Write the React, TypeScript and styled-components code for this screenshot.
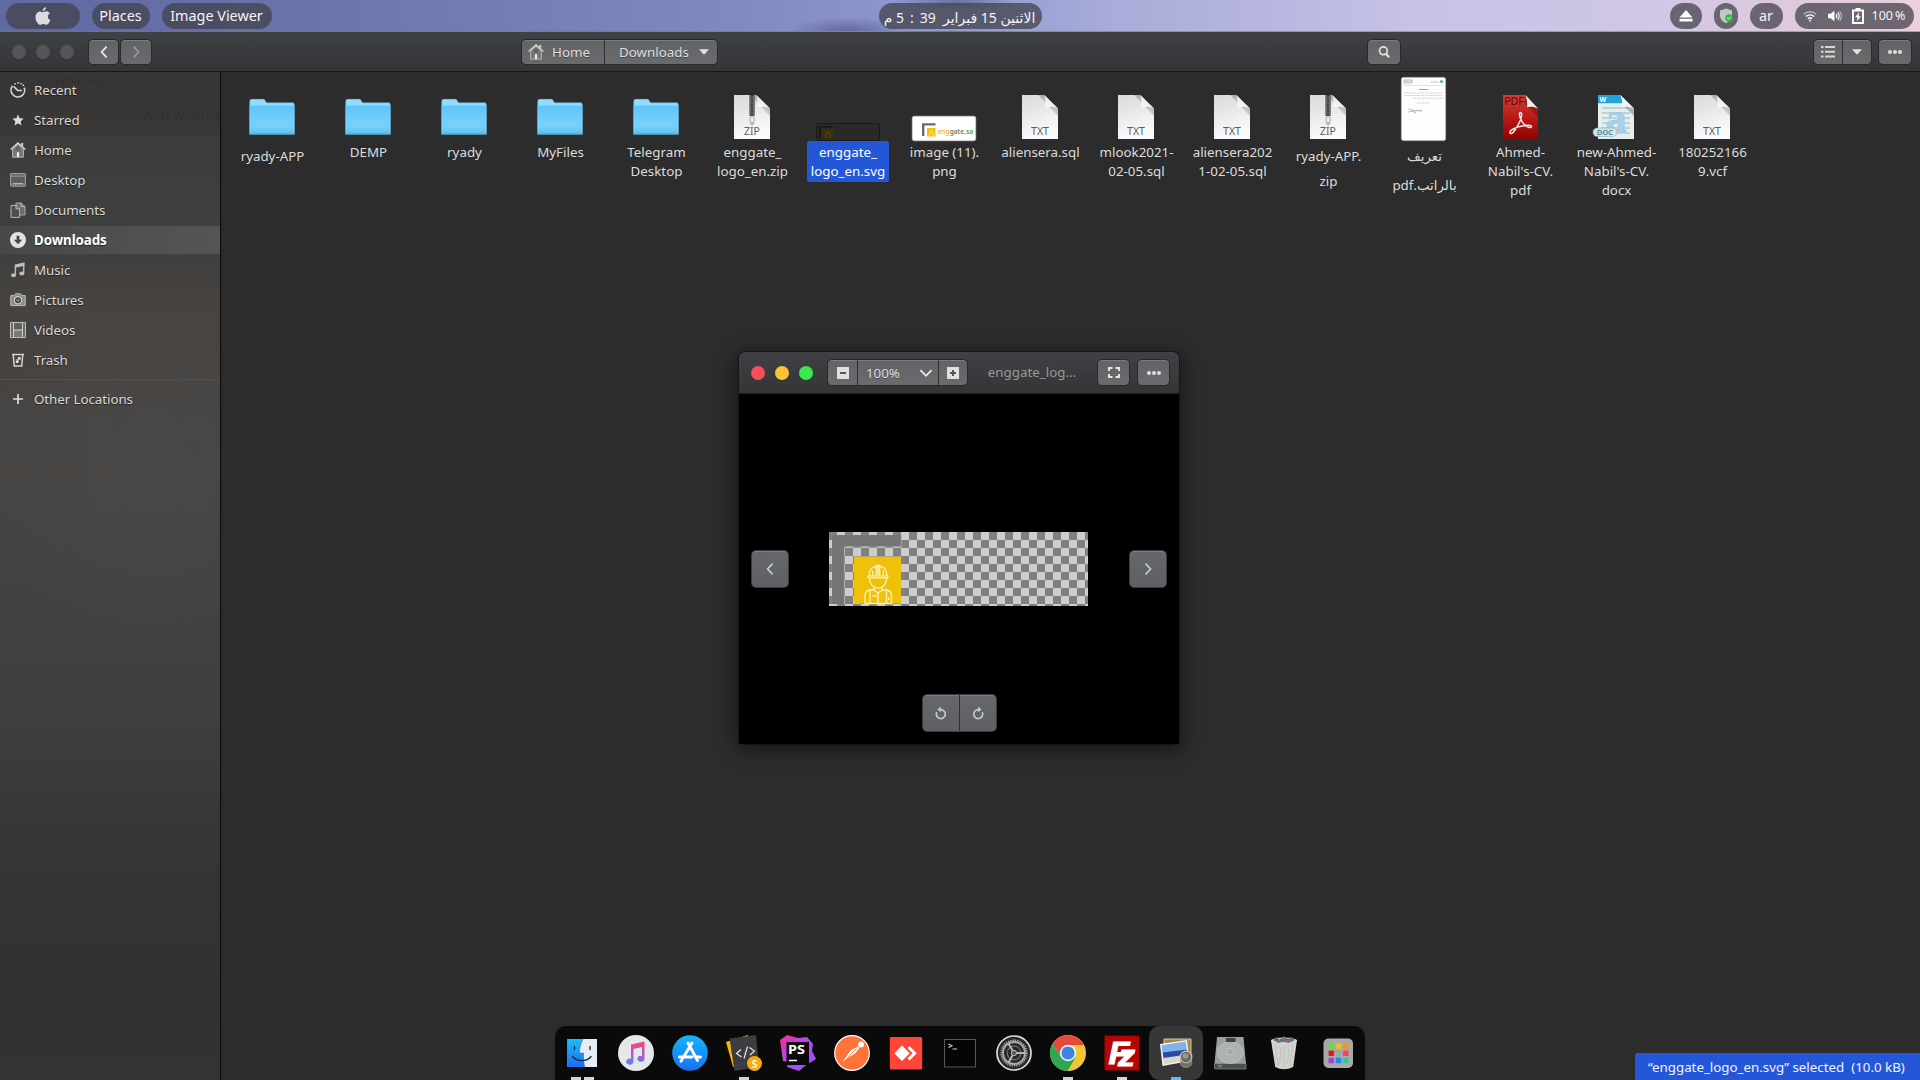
import React from "react";
import styled, { createGlobalStyle, css } from "styled-components";

const FONT = `"Noto Sans", "DejaVu Sans", sans-serif`;

const Global = createGlobalStyle`
  * { box-sizing: border-box; }
  html, body { margin: 0; padding: 0; background: #2c2c2c; }
  body { font-family: ${FONT}; font-size: 13.33px; color: #d6d6d6; overflow: hidden; }
  svg { display: block; flex: none; overflow: visible; }
`;

const Desktop = styled.div`
  position: relative;
  width: 1920px;
  height: 1080px;
  display: flex;
  flex-direction: column;
  overflow: hidden;
`;

/* ---------- top panel ---------- */
const Panel = styled.header`
  height: 32px;
  flex: none;
  display: grid;
  grid-template-columns: 1fr auto 1fr;
  padding: 3px 6px 0;
  border-bottom: 1px solid rgba(120, 115, 150, 0.55);
  background:
    radial-gradient(ellipse 60px 14px at 848px 31px, rgba(90, 88, 150, 0.75), rgba(90, 88, 150, 0) 100%),
    radial-gradient(ellipse 60px 9px at 955px 2px, rgba(80, 80, 130, 0.6), rgba(90, 88, 150, 0) 100%),
    linear-gradient(90deg, #6169a2 0, #6870a9 240px, #747db3 480px, #8089bf 720px, #919dd2 980px, #a9abd8 1110px, #b5b5e0 1250px, #c8c3e6 1420px, #cfc6e6 1640px, #e2cbdc 1840px, #ecd0dc 1920px);
`;

const PanelSide = styled.div<{ $end?: boolean }>`
  display: flex;
  gap: 12px;
  justify-content: ${(p) => (p.$end ? "flex-end" : "flex-start")};
`;

const Pill = styled.div<{ $w: number; $gap?: number }>`
  width: ${(p) => p.$w}px;
  height: 26px;
  padding: 0 1px 1px 0;
  border-radius: 13px;
  background: rgba(66, 66, 74, 0.74);
  color: #f4f4f4;
  font-size: 14.4px;
  line-height: 24px;
  display: flex;
  align-items: center;
  justify-content: center;
  gap: ${(p) => p.$gap ?? 10}px;
  white-space: pre;
`;

const DateText = styled.span`
  font-size: 14px;
  position: relative;
  top: 2px;
`;

const Small = styled.span`
  font-size: 12.5px;
  margin-left: -3px;
`;

/* ---------- window header ---------- */
const Toolbar = styled.div`
  height: 40px;
  flex: none;
  display: flex;
  align-items: center;
  padding: 0 8px 0 12px;
  background: linear-gradient(#404144, #343537);
  border-bottom: 1px solid #181818;
`;

const Dots = styled.div`
  display: flex;
  gap: 10px;
`;

const Dot = styled.i<{ $c: string }>`
  width: 14px;
  height: 14px;
  border-radius: 50%;
  background: ${(p) => p.$c};
`;

const Group = styled.div<{ $ml?: number }>`
  display: flex;
  margin-left: ${(p) => p.$ml ?? 0}px;
  border: 1px solid #28292b;
  border-radius: 5px;
  background: linear-gradient(#626366, #6a6b6d);
  box-shadow: inset 0 1px 0 #7c7d80;
  overflow: hidden;
`;

const Btn = styled.button<{ $w: number; $h?: number; $pad?: number; $line?: boolean; $gap?: number }>`
  width: ${(p) => p.$w}px;
  height: ${(p) => p.$h ?? 24}px;
  padding: 0 0 0 ${(p) => p.$pad ?? 0}px;
  border: 0;
  background: transparent;
  color: #dedede;
  font: 13.33px ${FONT};
  text-shadow: 0 1px 0 rgba(0, 0, 0, 0.35);
  display: flex;
  align-items: center;
  justify-content: ${(p) => (p.$pad ? "flex-start" : "center")};
  gap: ${(p) => p.$gap ?? 8}px;
  ${(p) => p.$line && css`border-left: 1px solid #2e2f31;`}
`;

/* ---------- body ---------- */
const Body = styled.div`
  flex: 1;
  display: flex;
  min-height: 0;
`;

const Sidebar = styled.nav`
  position: relative;
  width: 221px;
  flex: none;
  border-right: 1px solid #070707;
  padding-top: 4px;
  letter-spacing: -0.06px;
  background:
    radial-gradient(ellipse 150px 190px at 150px 390px, rgba(76, 74, 72, 0.6), rgba(70, 68, 66, 0)),
    linear-gradient(#383634 0, #3a3836 62px, #3c3d3b 66px, #3e4140 180px, #42403e 190px, #464341 240px, #474543 420px, #403f3d 640px, #363534 780px, #31312f 930px, #343331 1008px);
`;

const Ghost = styled.span<{ $x: number; $y: number; $s: number }>`
  position: absolute;
  left: ${(p) => p.$x}px;
  top: ${(p) => p.$y}px;
  font-size: ${(p) => p.$s}px;
  line-height: 18px;
  color: #33312f;
`;

const Place = styled.div<{ $on?: boolean }>`
  position: relative;
  height: 28px;
  margin-bottom: 2px;
  padding-left: 10px;
  display: flex;
  align-items: center;
  gap: 8px;
  color: ${(p) => (p.$on ? "#fff" : "#d8d8d6")};
  font-weight: ${(p) => (p.$on ? 700 : 400)};
  text-shadow: 0 1px 1px rgba(0, 0, 0, 0.5);
  background: ${(p) => (p.$on ? "linear-gradient(90deg, #464947, #535655)" : "none")};
`;

const Rule = styled.div`
  height: 1px;
  margin: 5px 0;
  background: #51504e;
`;

const Files = styled.main`
  flex: 1;
  display: flex;
  align-items: flex-start;
  padding: 5px 0 0 3px;
  background: #2c2c2c;
`;

const File = styled.div`
  width: 96px;
  display: flex;
  flex-direction: column;
  align-items: center;
`;

const Label = styled.div<{ $lh: number; $top: number; $on?: boolean }>`
  padding: ${(p) => p.$top}px 4px 1px;
  margin-left: ${(p) => (p.$on ? 0 : 1)}px;
  border-radius: 2px;
  line-height: ${(p) => p.$lh}px;
  text-align: center;
  white-space: pre;
  color: ${(p) => (p.$on ? "#fff" : "#dcdcdc")};
  background: ${(p) => (p.$on ? "#2457d8" : "none")};
`;

/* ---------- image viewer ---------- */
const Viewer = styled.section`
  position: absolute;
  left: 739px;
  top: 352px;
  width: 440px;
  height: 392px;
  border-radius: 6px 6px 0 0;
  overflow: hidden;
  background: #000;
  display: flex;
  flex-direction: column;
`;

const Shadow = styled.div`
  position: absolute;
  left: 739px;
  top: 352px;
  width: 440px;
  height: 392px;
  border-radius: 6px;
  box-shadow: 0 4px 18px 4px rgba(0, 0, 0, 0.42), 0 0 0 1px #1e1e1e;
`;

const ViewerBar = styled.div`
  height: 42px;
  flex: none;
  display: flex;
  align-items: center;
  padding: 0 9px 0 12px;
  background: linear-gradient(#404144, #343537);
  border-bottom: 1px solid #1c1c1d;
`;

const Title = styled.div`
  flex: 1;
  text-align: center;
  color: #97989a;
  font-size: 13.33px;
  padding: 0 1px 1px 0;
`;

const Stage = styled.div`
  flex: 1;
  display: grid;
  grid-template-columns: 38px 1fr 38px;
  grid-template-rows: 138px 74px 1fr;
  padding: 0 12px;
  justify-items: center;
`;

const StageCell = styled.div<{ $c: string; $r: string; $align?: string }>`
  grid-column: ${(p) => p.$c};
  grid-row: ${(p) => p.$r};
  align-self: ${(p) => p.$align ?? "center"};
  margin-bottom: ${(p) => (p.$align ? 12 : 0)}px;
`;

const Osd = styled(Group)`
  border-color: #3b3d42;
  background: linear-gradient(#66676a, #5f6063);
`;

const Checker = styled.div`
  width: 259px;
  height: 74px;
  margin-right: 1px;
  background: repeating-conic-gradient(#cdcdcd 0 25%, #808080 0 50%) 0 0 / 16px 16px;
`;

const ZoomArrow = styled.span`
  margin-left: 11px;
`;

/* ---------- dock & status ---------- */
const Dock = styled.footer`
  position: absolute;
  left: 555px;
  bottom: 0;
  height: 54px;
  display: flex;
  border-radius: 11px 11px 0 0;
  background: #0a0a0a;
`;

const DockItem = styled.div<{ $on?: boolean }>`
  width: 54px;
  height: 54px;
  padding-top: 9px;
  border-radius: 11px;
  background: ${(p) => (p.$on ? "#373737" : "none")};
  display: flex;
  flex-direction: column;
  align-items: center;
  justify-content: space-between;
`;

const Marks = styled.div`
  display: flex;
  gap: 3px;
  height: 3px;
`;

const Mark = styled.i<{ $c: string }>`
  width: 10px;
  height: 3px;
  background: ${(p) => p.$c};
`;

const Status = styled.div`
  position: absolute;
  right: 0;
  bottom: 0;
  width: 285px;
  height: 27px;
  padding: 2px 0 0 13px;
  border-radius: 2px 0 0 0;
  background: #2457d8;
  color: #f0f3fb;
  line-height: 24px;
  white-space: pre;
`;

/* ---------- icons ---------- */
const I = ({ s = 16, children }: { s?: number; children: React.ReactNode }) => (
  <svg width={s} height={s} viewBox="0 0 16 16" fill="none" stroke="#d2d2d0" strokeWidth="1.2">{children}</svg>
);

const HomeIcon = () => (
  <I>
    <path d="M2.600 7v8.200h10.800V7L8 2z" fill="#777876" stroke="#b4b4b2" strokeWidth="1" />
    <path d="M.6 7.600 8 .9l7.400 6.700" strokeWidth="1.300" stroke="#d4d4d2" />
    <path d="M11.200 1h2v3.400l-2-1.700z" fill="#d4d4d2" stroke="none" />
    <circle cx="8" cy="6.500" r="1.500" stroke="#4e4e4e" strokeWidth="1" />
    <path d="M6.900 10.200h2.200v4.800H6.900z" fill="#eee" stroke="none" />
  </I>
);

const placeIcons: Record<string, React.ReactNode> = {
  Recent: (
    <I>
      <path d="M2.600 3.800A6.800 6.800 0 1 0 14.200 5.600" strokeWidth="1.700" />
      <path d="M5 1.800h.1M8 .9h.1M11 1.600h.1M13.300 3.200h.1" strokeWidth="1.700" strokeLinecap="round" />
      <path d="M3.600 4.400 7.600 8.400H12" strokeWidth="1.500" />
    </I>
  ),
  Starred: <I><path d="m8 2.400 1.600 3.900 4 .3-3 2.800.9 4.200L8 11.300l-3.500 2.300.9-4.200-3-2.800 4-.3z" fill="#dedede" stroke="none" /></I>,
  Home: <HomeIcon />,
  Desktop: (
    <I>
      <rect x=".6" y="1.600" width="14.800" height="12.600" rx="1" fill="#5c5c5a" stroke="#9a9a98" />
      <path d="M1 4.100h14" stroke="#a2a2a0" strokeWidth="1" />
      <path d="M3 13v-1.400h10V13M5.500 13v-1.400M8 13v-1.400M10.500 13v-1.400" stroke="#c4c4c2" strokeWidth=".9" />
    </I>
  ),
  Documents: (
    <I>
      <path d="M6 1h5.200L15 4.600V13H6z" fill="#6c6c6a" stroke="#a8a8a6" strokeWidth="1" />
      <path d="M1 3.400h5l3.600 3.400v8.600H1z" fill="#4e4e4c" stroke="#b4b4b2" strokeWidth="1" />
      <path d="M6 3.400v3.400h3.600M11 1v3.600h4" stroke="#c2c2c0" strokeWidth="1" />
    </I>
  ),
  Downloads: (
    <I>
      <circle cx="8" cy="8" r="8" fill="#e2e2e2" stroke="none" />
      <path d="M6.600 3.800h2.800v4h2.800L8 12.200 3.800 7.800h2.800z" fill="#454846" stroke="none" />
    </I>
  ),
  Music: (
    <I>
      <path d="M5.400 13V3.400L13.700 1.400V11" stroke="#bcbcba" strokeWidth="1.400" />
      <path d="M5.400 2.600 14.400.6v3.200l-9 2z" fill="#bcbcba" stroke="none" />
      <ellipse cx="3.500" cy="13.200" rx="2.500" ry="2" fill="#bcbcba" stroke="none" />
      <ellipse cx="11.800" cy="11.600" rx="2.500" ry="2" fill="#bcbcba" stroke="none" />
    </I>
  ),
  Pictures: (
    <I>
      <path d="M.8 3.600h3.400L5.400 1.800h5.200l1.200 1.800h3.400v10H.8z" fill="#8b8b89" stroke="#bcbcba" strokeWidth="1" strokeLinejoin="round" />
      <circle cx="8" cy="8.300" r="3.600" stroke="#d0d0ce" fill="#6a6a68" />
      <circle cx="8" cy="8.300" r="2.400" stroke="#333" strokeWidth="1" fill="#777" />
    </I>
  ),
  Videos: (
    <I>
      <path d="M.5.5h15v15H.5z" fill="#7b7b79" stroke="#bcbcba" strokeWidth="1" />
      <path d="M3.500.5v15M12.500.5v15" strokeWidth=".9" />
      <path d="M2 1v14M14 1v14" stroke="#444" strokeDasharray="1 1.200" strokeWidth="1.300" />
      <path d="M4.200 1.200h7.600v6H4.200z" fill="#5e5e5c" stroke="none" />
      <path d="M4 8h8" stroke="#c8c8c6" strokeWidth="1" />
    </I>
  ),
  Trash: (
    <I>
      <path d="M2 2.400h12M3.300 3l.9 10.900h7.600L12.700 3" strokeWidth="1.500" />
      <path d="M8 5h2.600v2.800H8zM5.800 8.400h2.400v2.600H5.800z" fill="#dcdcda" stroke="none" />
      <path d="M6.800 7.200 8.600 9.800" stroke="#dcdcda" />
    </I>
  ),
};

const Down = ({ c = "#e2e2e2" }: { c?: string }) => (
  <svg width="10" height="6" viewBox="0 0 10 6"><path d="M0 .3h10L5 5.800z" fill={c} /></svg>
);

const Chevron = ({ d, c = "#eee", w = 1.7 }: { d: "l" | "r" | "d"; c?: string; w?: number }) => (
  <svg width="14" height="14" viewBox="0 0 14 14" fill="none" stroke={c} strokeWidth={w}>
    <path d={d === "l" ? "M9.600 1.600 4.600 7l5 5.400" : d === "r" ? "M4.600 1.600 9.600 7l-5 5.400" : "M1.400 4.200 7 9.800l5.600-5.600"} />
  </svg>
);

const More = () => (
  <svg width="16" height="6" viewBox="0 0 16 6" fill="#dedede">
    <circle cx="3" cy="3" r="2" /><circle cx="8" cy="3" r="2" /><circle cx="13" cy="3" r="2" />
  </svg>
);

const FolderIcon = () => (
  <svg width="64" height="64" viewBox="0 0 64 64">
    <path d="M9.500 24.400q0-2.400 2-2.400h11.600c1.400 0 2 1 3.400 3.600h26q2 0 2 2V57H9.500z" fill="#92dbfe" stroke="#3f6478" strokeWidth=".5" />
    <path d="M9.500 28.400h45V57q0 .8-.8.8H10.300q-.8 0-.8-.8z" fill="url(#fold)" />
    <path d="M9.500 57.200h45" stroke="#3f91b5" strokeWidth="1" />
    <defs>
      <linearGradient id="fold" x1="0" x2="0" y1="0" y2="1">
        <stop stopColor="#60c6fa" /><stop offset=".7" stopColor="#78d1fc" /><stop offset="1" stopColor="#62bdec" />
      </linearGradient>
    </defs>
  </svg>
);

const Sheet = ({ text, zip }: { text: string; zip?: boolean }) => (
  <svg width="64" height="64" viewBox="0 0 64 64">
    <defs>
      <linearGradient id="sheet" x1="0" x2=".3" y1="0" y2="1">
        <stop stopColor="#d9d9d9" /><stop offset="1" stopColor="#fbfbfb" />
      </linearGradient>
      <linearGradient id="curl" x1="0" x2="1" y1="1" y2="0">
        <stop stopColor="#fff" /><stop offset=".6" stopColor="#e6e6e6" />
      </linearGradient>
      <linearGradient id="shade" x1="0" x2=".8" y1="1" y2="0">
        <stop offset=".3" stopColor="#888" stopOpacity="0" /><stop offset="1" stopColor="#666" stopOpacity=".8" />
      </linearGradient>
    </defs>
    <path d="M14 18h22l14 13.500V62H14z" fill="url(#sheet)" />
    <path d="M30 18h6l14 13.500v8z" fill="url(#shade)" />
    <path d="M36.500 18 50 31.500c-4-2-9-2-13-1.200.6-4 .8-8-.5-12.300z" fill="url(#curl)" />
    {zip && (
      <g>
        <path d="M29.500 18h5v21h-5z" fill="#77736c" />
        <path d="M32 18v21" stroke="#33312e" strokeWidth="2" strokeDasharray="1 .8" />
        <path d="M30 18v21M34.200 18v21" stroke="#56534e" strokeWidth=".8" />
        <rect x="30.200" y="39.500" width="3.800" height="8.500" rx="1.900" fill="#eee" stroke="#999" strokeWidth=".8" />
        <circle cx="32.100" cy="45.800" r=".9" fill="#888" />
      </g>
    )}
    <text x="32" y="58" fontFamily={FONT} fontSize="10.500" fill="#5c5c5c" textAnchor="middle">{text}</text>
  </svg>
);

const PdfIcon = () => (
  <svg width="64" height="64" viewBox="0 0 64 64">
    <defs>
      <linearGradient id="pdf" x1="0" x2="0" y1="0" y2="1"><stop stopColor="#d33c33" /><stop offset=".6" stopColor="#b41412" /><stop offset="1" stopColor="#8c0404" /></linearGradient>
    </defs>
    <path d="M15 18h22l13 13.500V62H15z" fill="url(#pdf)" />
    <path d="M37 19 50 31.500v8L36 26z" fill="#4d0505" opacity=".35" />
    <path d="M37.500 18 50 31.500c-4-2-8-2-11-1.200.6-4 0-8-1.500-12.300z" fill="#f0f0f0" />
    <text x="26" y="28" fontFamily={FONT} fontSize="10.500" fill="#4c0d0a" textAnchor="middle">PDF</text>
    <path d="M22 56c-1-3 7-6 12-7s9.500-1 9.500.6c0 2.400-6 .4-9.500-5-2.500-4-3.500-9-1.500-9.200 2.200 0 1 6-1.800 11.400C28 52 24 58.500 22 56z" fill="none" stroke="#f6e8e8" strokeWidth="1.500" />
  </svg>
);

const DocIcon = () => (
  <svg width="64" height="64" viewBox="0 0 64 64">
    <path d="M14 18h22l14 13.500V62H14z" fill="#e4eeee" />
    <path d="M14 18h22l8 8.200H14z" fill="#24a2dc" />
    <path d="M18 31h26M18 36h28M18 41h28M18 46h28M18 51h28M18 56h28" stroke="#9db6b8" strokeWidth="1" />
    <path d="m38 27 12 12v-8z" fill="#777" opacity=".5" />
    <path d="M36.500 18 50 31.500c-4-2-9-2-12-1.200.6-4 0-8-1.500-12.300z" fill="#f4f4f4" />
    <text x="19" y="25" fontFamily={FONT} fontWeight="700" fontSize="7" fill="#fff" textAnchor="middle">W</text>
    <text x="32" y="54.500" fontFamily="Liberation Serif, serif" fontWeight="700" fontSize="42" fill="#a3d3ee" stroke="#8cc2e0" strokeWidth=".5" textAnchor="middle">a</text>
    <rect x="9" y="51" width="24" height="8.500" rx="4.200" fill="#d9e2e4" stroke="#9aa8ac" strokeWidth=".6" />
    <text x="20.800" y="58" fontFamily={FONT} fontWeight="700" fontSize="7.500" fill="#3e98b4" textAnchor="middle">DOC</text>
  </svg>
);

const SvgThumb = () => (
  <svg width="64" height="64" viewBox="0 0 64 64">
    <rect x=".5" y="46.500" width="63" height="17" rx="2" fill="#292929" stroke="#191919" />
    <path d="M3 61V49h14v1.500H4.800V61z" fill="#171717" />
    <rect x="6" y="52" width="11.500" height="9.500" fill="#3b2f07" />
    <path d="M9.500 61v-2.500l2.300-4 2.300 4V61" fill="none" stroke="#5a4a12" />
  </svg>
);

const PngThumb = () => (
  <svg width="64" height="64" viewBox="0 0 64 64">
    <rect x=".3" y="39.300" width="63.400" height="24.400" rx="2" fill="#fff" stroke="#cfcfcf" strokeWidth=".8" />
    <path d="M10 59V46.300h13.500v2.200H12.400V59z" fill="#6d6b6b" />
    <rect x="15" y="51" width="8.500" height="8.500" fill="#f0c20c" />
    <path d="M17.500 59v-2l1.800-3.500 1.800 3.500v2" fill="none" stroke="#fbeaa8" strokeWidth=".8" />
    <text x="25.500" y="57" fontFamily={FONT} fontWeight="600" fontSize="7.400" textLength="35.500" lengthAdjust="spacingAndGlyphs">
      <tspan fill="#e8bd1a">eng</tspan><tspan fill="#777">gate</tspan><tspan fill="#c33">.</tspan><tspan fill="#4aa843">sa</tspan>
    </text>
  </svg>
);

const LetterThumb = () => (
  <svg width="64" height="64" viewBox="0 0 64 64">
    <rect x="9.400" y=".4" width="44.200" height="63.200" rx="2" fill="#fdfdfd" stroke="#b9b9b9" strokeWidth=".8" />
    <path d="M12 3h8v3h-8z" fill="none" stroke="#999" strokeWidth=".7" />
    <path d="M13 4.500h6M39 5h8" stroke="#a7b9b0" strokeWidth="1" strokeDasharray="1.500 .5" />
    <circle cx="49.500" cy="4.500" r="1.600" fill="#6cab93" />
    <path d="M11 8.500h41" stroke="#d9d9d9" strokeWidth=".7" />
    <path d="M27 12.500h9" stroke="#999" strokeWidth=".9" />
    <path d="M12 16h39M12 18.500h39M22 21.300h29M25 26h13" stroke="#ccc" strokeWidth=".8" strokeDasharray="2 .6" />
    <path d="M16 31.500c3 1 5 3 8 4.500M16 35c4-1 9-2 14-.8M23 33.500h7M20 32l3 4" stroke="#adafbb" strokeWidth=".8" fill="none" />
  </svg>
);

const Worker = () => (
  <svg width="259" height="74" viewBox="0 0 259 74">
    <path d="M3 72V3h69v11.500H15V72z" fill="#777475" />
    <path d="M72.300 3v12H15.400V72" fill="none" stroke="#a5a4a4" strokeWidth=".8" />
    <path d="M25 25h47v46.500H25z" fill="#efc10a" />
    <path d="M25 24.500h47" stroke="#b3a468" strokeWidth="1" />
    <g fill="none" stroke="#fdf3bf" strokeWidth="1.300">
      <path d="M40 44c0-6 3-9.500 7.200-9.500h3.600c4.200 0 7 3.500 7 9.500" />
      <path d="M47.300 43V33.500h3.400V43M43.500 43v-4.500M54.300 43v-4.500M49 34v9" />
      <rect x="39" y="43.800" width="20" height="2" rx="1" />
      <path d="M40.300 46.500c0 5 4 9.700 8.700 9.700s8.700-4.700 8.700-9.700" />
      <path d="M45.200 55.500v3l3.800 2.500 4-2.500v-3" />
      <path d="M45 58h-4.500c-3 .6-4.500 3-4.500 6v7.500h26.500V64c0-3-1.500-5.400-4.500-6H53" />
      <path d="M41 58.500v13M57.500 58.500v13M49 61v10.500M43.500 64h4M59.800 65v3" />
    </g>
  </svg>
);

const Rotate = ({ cw }: { cw?: boolean }) => (
  <svg width="14" height="14" viewBox="0 0 14 14" fill="none" stroke="#c3cad6" strokeWidth="1.600">
    <g transform={cw ? "translate(14 0) scale(-1 1)" : undefined}>
      <path d="M2.700 6.200A4.500 4.500 0 1 0 7.200 3.600H6" />
      <path d="M6.800.6v5.600L3.400 3.400z" fill="#c3cad6" stroke="none" />
    </g>
  </svg>
);

const D = ({ children }: { children: React.ReactNode }) => <svg width="36" height="36" viewBox="0 0 36 36">{children}</svg>;

const Gear = () => (
  <D>
    <circle cx="18" cy="18" r="17" fill="#28292b" stroke="#dcdcdc" strokeWidth="1.700" />
    <circle cx="18" cy="18" r="12.600" fill="none" stroke="#a9abad" strokeWidth="2" strokeDasharray="1.300 1" />
    <circle cx="18" cy="18" r="11" fill="none" stroke="#a9abad" strokeWidth="1.800" />
    <circle cx="18" cy="18" r="6.800" fill="none" stroke="#6c6e70" strokeWidth="1.200" />
    <path d="M18 18h11M18 18l-5.500-9.500M18 18l-5.500 9.500" stroke="#b4b6b8" strokeWidth="2" />
    <circle cx="18" cy="18" r="2.600" fill="#55575a" stroke="#b9bbbd" />
  </D>
);

const dock: { icon: React.ReactNode; marks?: string[]; on?: boolean }[] = [
  {
    marks: ["#d5d5d5", "#d5d5d5"],
    icon: (
      <D>
        <defs><linearGradient id="fi" x1="0" x2="0" y1="0" y2="1"><stop stopColor="#17c0fb" /><stop offset="1" stopColor="#1c6bf0" /></linearGradient></defs>
        <path d="M3.500 4H33v28H3.500z" fill="#e6edf5" />
        <path d="M3.500 4H19c-2.500 5-3.500 9-3.700 14h4.200c-.2 5 .2 9.500 1.200 14H3.500z" fill="url(#fi)" />
        <path d="M19 4c-2.500 5-3.500 9-3.700 14h4.200c-.2 5 .2 9.500 1.200 14" fill="none" stroke="#20588d" strokeWidth=".5" />
        <path d="M10.500 11.500v3M26 11.500v3M8.500 21.500c5 5.500 14 5.500 18.500 0" fill="none" stroke="#15253a" strokeWidth="1.300" strokeLinecap="round" />
      </D>
    ),
  },
  {
    icon: (
      <D>
        <defs><linearGradient id="mu" x1="0" x2="0" y1="0" y2="1"><stop stopColor="#f8466c" /><stop offset=".6" stopColor="#b05bd8" /><stop offset="1" stopColor="#4f8cf8" /></linearGradient></defs>
        <circle cx="18" cy="18" r="18" fill="#e5e7ea" />
        <path d="M13 9.500 26.500 6.500v17.500a3.600 3 0 1 1-2.500-3V12l-8.500 2v12.500A3.700 3.100 0 1 1 13 23.700z" fill="url(#mu)" />
      </D>
    ),
  },
  {
    icon: (
      <D>
        <defs><linearGradient id="as" x1="0" x2="0" y1="0" y2="1"><stop stopColor="#14b4fb" /><stop offset="1" stopColor="#1873f2" /></linearGradient></defs>
        <circle cx="18" cy="18" r="17.800" fill="url(#as)" />
        <path d="m16 8 9.500 17.500M20 8l-9 15M7.500 22h12.500M24.500 22h4M9.800 25l-.8 1.200" stroke="#fff" strokeWidth="2.900" strokeLinecap="round" />
      </D>
    ),
  },
  {
    marks: ["#d5d5d5"],
    icon: (
      <D>
        <path d="M0 7 22 0l3 30-18 2z" fill="#f7b50c" />
        <path d="M3.500 3.500 30 0l3 32-24.500 4z" fill="#3b3d40" />
        <path d="m15 14.500-4.500 4 5 3.500M23.500 12.500l5 3.500-4.500 4M21.500 11.500l-3.500 12" fill="none" stroke="#e8e8e8" strokeWidth="1.200" />
        <circle cx="28.500" cy="28.500" r="7.500" fill="#f8aa12" />
        <text x="28.500" y="32.600" fontFamily={FONT} fontWeight="700" fontSize="11" fill="#fff6dc" textAnchor="middle">S</text>
      </D>
    ),
  },
  {
    icon: (
      <D>
        <defs><linearGradient id="ps" x1="0" x2="1" y1="0" y2="1"><stop stopColor="#f72a8f" /><stop offset=".45" stopColor="#b449f0" /><stop offset="1" stopColor="#8f55f5" /></linearGradient></defs>
        <path d="m0 5 7-5 11 3 9-1 6 7-1 7 4 8-11 7-6 5-12-4 1-5-5-1z" fill="url(#ps)" />
        <path d="M6.500 7H29v23H6.500z" fill="#0a0a0c" />
        <text x="8" y="18.700" fontFamily={FONT} fontWeight="700" fontSize="12.500" fill="#fff" textLength="17" lengthAdjust="spacingAndGlyphs">PS</text>
        <path d="M9 25.500h8" stroke="#fff" strokeWidth="1.500" />
      </D>
    ),
  },
  {
    icon: (
      <D>
        <circle cx="18" cy="18" r="17.300" fill="#ff7238" stroke="#fff" strokeWidth="1.200" />
        <circle cx="27" cy="9.500" r="3" fill="#fff" />
        <path d="M24.500 11.500 17 15l-5 7-4 5.500 5.500-4.500 7.500-4.500 4-5z" fill="#fff" />
        <path d="m22.500 13.500-9 9M18 22l-3 1" stroke="#ff7238" strokeWidth=".8" />
      </D>
    ),
  },
  {
    icon: (
      <D>
        <rect x="1.800" y="2" width="32.400" height="32.400" rx="1.500" fill="#fd4538" />
        <path d="m14 10.500 7.700 7.700-7.700 7.700-7.700-7.700z" fill="#fff" />
        <path d="m20.500 12 6.200 6.200-6.200 6.200" stroke="#fff" strokeWidth="3" fill="none" />
      </D>
    ),
  },
  {
    icon: (
      <D>
        <path d="M2.500 4.500h31v27.500h-31z" fill="#050505" stroke="#55595a" />
        <path d="m6.500 9 3.500 1.800-3.500 1.800M10.500 14h4.500" stroke="#cfcfcf" strokeWidth="1.100" fill="none" />
      </D>
    ),
  },
  { icon: <Gear /> },
  {
    marks: ["#d5d5d5"],
    icon: (
      <D>
        <circle cx="18" cy="18" r="18" fill="#f3c63a" />
        <path d="M18 10h15.900A18 18 0 0 0 2.600 8.700l8.600 13.300z" fill="#e5493c" />
        <path d="M2.600 8.700A18 18 0 0 0 17.500 36l8-13.500L11 22z" fill="#30a553" />
        <circle cx="18" cy="18" r="8.200" fill="#f4f4f4" />
        <circle cx="18" cy="18" r="6.600" fill="#3f83e8" />
      </D>
    ),
  },
  {
    marks: ["#d5d5d5"],
    icon: (
      <D>
        <path d="M1 1h34v34H1z" fill="#b50505" stroke="#a00" strokeWidth="1.600" strokeDasharray="2 1.200" />
        <g fontFamily="Liberation Sans, sans-serif" fontStyle="italic" fontWeight="700" fill="#fff" stroke="#fff" strokeWidth=".9">
          <text x="4.500" y="28.500" fontSize="32" textLength="21" lengthAdjust="spacingAndGlyphs">F</text>
          <text x="14" y="31" fontSize="30" textLength="17" lengthAdjust="spacingAndGlyphs">z</text>
        </g>
      </D>
    ),
  },
  {
    on: true,
    marks: ["#5bbdf8"],
    icon: (
      <D>
        <path d="M6 4h27v20H6z" fill="#a88650" stroke="#d9c8a0" />
        <path d="m2 9 27-4 2.500 21L4.500 31z" fill="#f4f4f4" />
        <path d="m3.500 10.300 24.300-3.700 1 8L4.700 19z" fill="#7fb3ea" />
        <path d="m4.700 17.500 24.200-3 .6 5.500-24 4z" fill="#2a4aa0" />
        <path d="m5.300 23 24-3.500.7 5.300L6 29.500z" fill="#d9d5c8" />
        <circle cx="28" cy="22" r="5.800" fill="#6d6a63" stroke="#c0c0c0" strokeWidth="1.300" />
        <path d="M22.500 25v4c1.500 4.500 9.500 4.500 11.200 0v-4c-2 4-9 4-11.200 0z" fill="#77705f" stroke="#aaa" strokeWidth=".6" />
        <circle cx="27.500" cy="21" r="2.800" fill="#99978f" />
      </D>
    ),
  },
  {
    icon: (
      <D>
        <path d="M5 2h26.500l2.500 27H2.500z" fill="#9a9f9f" />
        <path d="M2.500 28.500h31.500v5.500H2.500z" fill="#4b4f4f" stroke="#989c9c" strokeWidth=".6" />
        <ellipse cx="18.200" cy="17.500" rx="13" ry="11" fill="#adb3b3" stroke="#bfc4c4" strokeWidth=".7" />
        <ellipse cx="18.200" cy="16.500" rx="4" ry="3.400" fill="#a4aaaa" stroke="#c8cccc" strokeWidth=".7" />
        <path d="M14 3h9.500v4H14z" fill="#3d4242" />
        <path d="M6 30.500h4M6 32h4" stroke="#8fa" strokeWidth=".4" />
      </D>
    ),
  },
  {
    icon: (
      <D>
        <path d="M5 5h26l-3.800 27q-9 4.500-18 0z" fill="#d2d1ce" />
        <path d="m9 9 3 22M18 10v23M27 9l-3 22M13.500 10l1.500 8-2 12M22 10l1 10-2 8" stroke="#c0bfbc" strokeWidth=".9" fill="none" />
        <ellipse cx="18" cy="5.500" rx="13" ry="3" fill="#dad9d6" />
        <path d="m7 5 4-3 3 3 4-4 3 4 4-3 4 3-6 3-6-1-5 1z" fill="#777" />
        <path d="m9 5 3-1M20 4l3 1" stroke="#b63a35" strokeWidth="1.500" /><path d="m14 4 3 2M25 4l2 2" stroke="#3a6fa8" strokeWidth="1.500" />
      </D>
    ),
  },
  {
    icon: (
      <D>
        <rect x="3.500" y="3.500" width="29.500" height="29.500" rx="5" fill="#a9a9a9" />
        {["#5be143", "#f9c20e", "#f7941b", "#d91f26", "#a0a3a8", "#fb3e6a", "#a540d8", "#1a8bf2", "#2fc79b"].map((c, i) => (
          <rect key={c} x={8.5 + (i % 3) * 7.2} y={8.4 + Math.floor(i / 3) * 7.2} width="5.600" height="5.400" rx="1" fill={c} />
        ))}
      </D>
    ),
  },
];

const files: { label: string; icon: React.ReactNode; lh?: number; top?: number; on?: boolean }[] = [
  { label: "ryady-APP", icon: <FolderIcon />, lh: 25, top: 3 },
  { label: "DEMP", icon: <FolderIcon /> },
  { label: "ryady", icon: <FolderIcon /> },
  { label: "MyFiles", icon: <FolderIcon /> },
  { label: "Telegram\nDesktop", icon: <FolderIcon /> },
  { label: "enggate_\nlogo_en.zip", icon: <Sheet text="ZIP" zip /> },
  { label: "enggate_\nlogo_en.svg", icon: <SvgThumb />, on: true },
  { label: "image (11).\npng", icon: <PngThumb /> },
  { label: "aliensera.sql", icon: <Sheet text="TXT" /> },
  { label: "mlook2021-\n02-05.sql", icon: <Sheet text="TXT" /> },
  { label: "aliensera202\n1-02-05.sql", icon: <Sheet text="TXT" /> },
  { label: "ryady-APP.\nzip", icon: <Sheet text="ZIP" zip />, lh: 25, top: 3 },
  { label: "تعريف\nبالراتب.pdf", icon: <LetterThumb />, lh: 29, top: 1 },
  { label: "Ahmed-\nNabil's-CV.\npdf", icon: <PdfIcon /> },
  { label: "new-Ahmed-\nNabil's-CV.\ndocx", icon: <DocIcon /> },
  { label: "180252166\n9.vcf", icon: <Sheet text="TXT" /> },
];

export default function App() {
  return (
    <Desktop>
      <Global />
      <Panel>
        <PanelSide>
          <Pill $w={74}>
            <svg width="16" height="18" viewBox="0 0 16 18" fill="#dcdcdc">
              <path d="M11 0c.2 1.900-1.600 4-3.400 4C7.400 2.200 9.200.3 11 0z" />
              <path d="M8 5.200c.9 0 1.900-.9 3.400-.9 1.400 0 2.700.8 3.400 1.900-2.900 1.700-2.400 5.700.6 6.900-.7 1.900-2.200 4.700-3.900 4.700-1.200 0-1.700-.8-3.200-.8s-2 .8-3.200.8C3 17.800.5 13.700.5 10.200c0-3.400 2.200-5.800 4.600-5.800 1.200 0 2.200.8 2.900.8z" />
            </svg>
          </Pill>
          <Pill $w={58}>Places</Pill>
          <Pill $w={110}>Image Viewer</Pill>
        </PanelSide>
        <Pill $w={163}><DateText dir="rtl">{"الاثنين 15 فبراير  39\u2009 :\u2009 5 م"}</DateText></Pill>
        <PanelSide $end>
          <Pill $w={32}>
            <svg width="14" height="14" viewBox="0 0 14 14" fill="#fff"><path d="m7 1 6.500 7.500H.5zM.5 9.800h13v2.700H.5z" /></svg>
          </Pill>
          <Pill $w={24}>
            <svg width="14" height="16" viewBox="0 0 14 16">
              <path d="M7 .5 13 2.500v5c0 3.500-2.500 6-6 7.500-3.500-1.500-6-4-6-7.500v-5z" fill="#c6c6c6" />
              <circle cx="10" cy="10" r="3.800" fill="#39b54a" /><path d="m8.300 10 1.200 1.200 2.200-2.400" stroke="#fff" fill="none" />
            </svg>
          </Pill>
          <Pill $w={33}>ar</Pill>
          <Pill $w={119} $gap={11}>
            <svg width="14" height="12" viewBox="0 0 14 12" fill="none" stroke="#fff" strokeWidth="1.400">
              <path d="M.7 4.300a9 9 0 0 1 12.600 0" opacity=".5" /><path d="M2.800 6.600a6 6 0 0 1 8.400 0M4.900 8.700a3 3 0 0 1 4.200 0" /><circle cx="7" cy="10.500" r=".9" fill="#fff" stroke="none" />
            </svg>
            <svg width="13" height="12" viewBox="0 0 13 12" fill="none" stroke="#fff" strokeWidth="1.300">
              <path d="M0 3.800h2.600L6.400.8v10.400L2.600 8.200H0z" fill="#fff" stroke="none" /><path d="M8 4a3 3 0 0 1 0 4M9.700 2.500a5 5 0 0 1 0 7" /><path d="M11.500 1.200a7 7 0 0 1 0 9.600" opacity=".5" />
            </svg>
            <svg width="12" height="16" viewBox="0 0 12 16" fill="none">
              <path d="M1 2.500h10v12.500H1z" stroke="#fff" strokeWidth="2" /><path d="M3.500 0h5v2.500h-5z" fill="#fff" /><path d="M7.200 4.300 3 9.200h2.500l-.7 4L9 8.200H6.500z" fill="#fff" />
            </svg>
            <Small>{"100\u2009%"}</Small>
          </Pill>
        </PanelSide>
      </Panel>

      <Toolbar>
        <Dots><Dot $c="#54555a" /><Dot $c="#54555a" /><Dot $c="#54555a" /></Dots>
        <Group $ml={14}><Btn $w={29}><Chevron d="l" /></Btn></Group>
        <Group $ml={1}><Btn $w={30}><Chevron d="r" c="#98999b" /></Btn></Group>
        <Group $ml={369}>
          <Btn $w={82} $pad={6}><HomeIcon />Home</Btn>
          <Btn $w={113} $pad={14} $gap={10} $line><span>Downloads</span><Down /></Btn>
        </Group>
        <Group $ml={649}>
          <Btn $w={32}>
            <svg width="14" height="14" viewBox="0 0 14 14" fill="none" stroke="#e2e2e2" strokeWidth="1.700"><circle cx="6.400" cy="5.800" r="3.900" /><path d="m8.800 8.600 3.200 3.600" strokeWidth="2.200" /></svg>
          </Btn>
        </Group>
        <Group $ml={412}>
          <Btn $w={28}>
            <svg width="14" height="12" viewBox="0 0 14 12" fill="#d6d6d6"><path d="M0 0h2.500v2H0zM4 0h10v2H4zM0 4.700h2.500v2H0zM4 4.700h10v2H4zM0 9.400h2.500v2H0zM4 9.400h10v2H4z" /></svg>
          </Btn>
          <Btn $w={29} $line><Down /></Btn>
        </Group>
        <Group $ml={6}><Btn $w={32}><More /></Btn></Group>
      </Toolbar>

      <Body>
        <Sidebar>
          <Ghost $x={54} $y={-1} $s={13}>WhatsApp</Ghost>
          <Ghost $x={142} $y={34} $s={14}>web.whatsa</Ghost>
          {Object.keys(placeIcons).map((name) => (
            <Place key={name} $on={name === "Downloads"}>{placeIcons[name]}{name}</Place>
          ))}
          <Rule />
          <Place><I><path d="M8 3v10M3 8h10" stroke="#dedede" strokeWidth="1.700" /></I>Other Locations</Place>
        </Sidebar>
        <Files>
          {files.map((f) => (
            <File key={f.label}>
              {f.icon}
              <Label dir="auto" $lh={f.lh ?? 19} $top={f.top ?? 2} $on={f.on}>{f.label}</Label>
            </File>
          ))}
        </Files>
      </Body>

      <Shadow />
      <Viewer>
        <ViewerBar>
          <Dots><Dot $c="#f84e57" /><Dot $c="#fdc236" /><Dot $c="#3ae84b" /></Dots>
          <Group $ml={14}>
            <Btn $w={29} $h={25}><svg width="12" height="12" viewBox="0 0 12 12"><path fill="#e0e0e0" d="M0 0h12v12H0z" /><path d="M3 6h6" stroke="#555" strokeWidth="2" /></svg></Btn>
            <Btn $w={81} $h={25} $pad={8} $line><span>100%</span><ZoomArrow><Chevron d="d" w={1.8} /></ZoomArrow></Btn>
            <Btn $w={29} $h={25} $line><svg width="12" height="12" viewBox="0 0 12 12"><path fill="#e0e0e0" d="M0 0h12v12H0z" /><path d="M3 6h6M6 3v6" stroke="#555" strokeWidth="2" /></svg></Btn>
          </Group>
          <Title>enggate_log...</Title>
          <Group>
            <Btn $w={31} $h={25}><svg width="12" height="11" viewBox="0 0 12 11" fill="none" stroke="#e4e4e4" strokeWidth="2"><path d="M1 4V1h3.500M7.500 1H11v3M11 7v3H7.500M4.500 10H1V7" /></svg></Btn>
          </Group>
          <Group $ml={7}><Btn $w={31} $h={25}><More /></Btn></Group>
        </ViewerBar>
        <Stage>
          <StageCell $c="1" $r="2"><Osd><Btn $w={36} $h={36}><Chevron d="l" c="#c3cad6" /></Btn></Osd></StageCell>
          <StageCell $c="2" $r="2"><Checker><Worker /></Checker></StageCell>
          <StageCell $c="3" $r="2"><Osd><Btn $w={36} $h={36}><Chevron d="r" c="#c3cad6" /></Btn></Osd></StageCell>
          <StageCell $c="2" $r="3" $align="end"><Osd><Btn $w={36} $h={36}><Rotate /></Btn><Btn $w={37} $h={36} $line><Rotate cw /></Btn></Osd></StageCell>
        </Stage>
      </Viewer>

      <Dock>
        {dock.map((d, i) => (
          <DockItem key={i} $on={d.on}>
            {d.icon}
            <Marks>{d.marks?.map((c, j) => <Mark key={j} $c={c} />)}</Marks>
          </DockItem>
        ))}
      </Dock>
      <Status>“enggate_logo_en.svg” selected  (10.0 kB)</Status>
    </Desktop>
  );
}
